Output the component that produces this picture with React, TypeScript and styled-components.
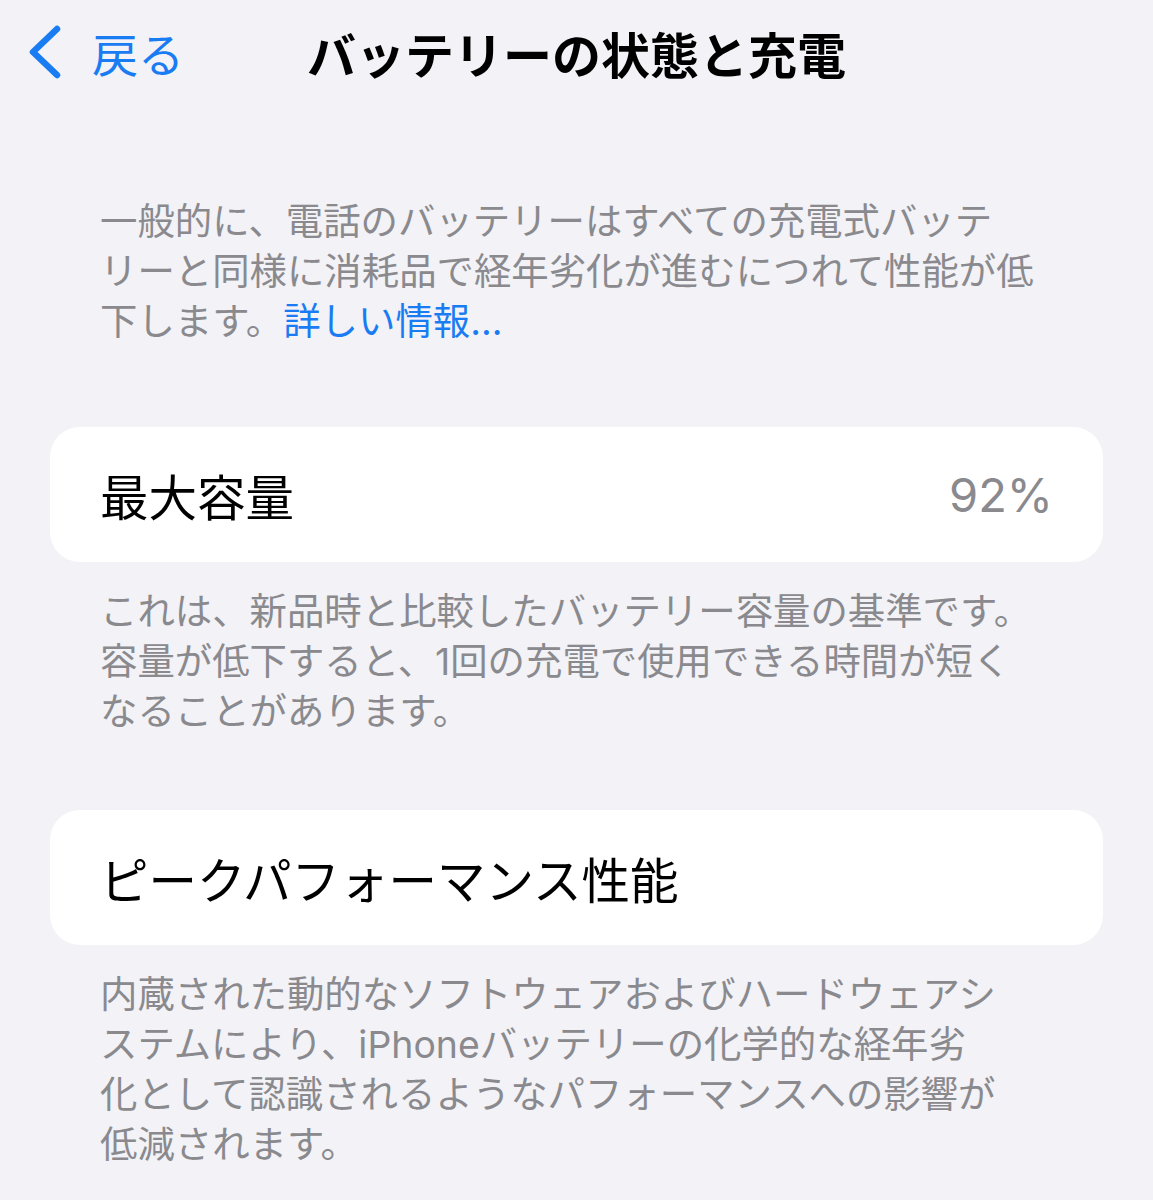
import * as React from 'react';
import styled, { createGlobalStyle } from 'styled-components';

const GlobalStyle = createGlobalStyle`
  html, body {
    margin: 0;
    padding: 0;
    background: #f2f2f7;
  }
  body {
    font-family: Inter, "Noto Sans CJK JP", sans-serif;
    -webkit-font-smoothing: antialiased;
  }
`;

const StyledPage = styled.div`
  display: flex;
  flex-direction: column;
  width: 1153px;
  min-height: 1200px;
  background: #f2f2f7;
`;

const StyledNav = styled.header`
  display: grid;
  grid-template-columns: 1fr auto 1fr;
  align-items: center;
  height: 104px;
`;

const StyledBack = styled.button`
  justify-self: start;
  display: flex;
  align-items: center;
  gap: 30px;
  border: none;
  padding: 0 0 0 26px;
  background: none;
  font-family: inherit;
  font-size: 46px;
  color: #1a7cf2;
  cursor: pointer;
`;

const StyledTitle = styled.h1`
  margin: 0;
  font-size: 49px;
  font-weight: 700;
  color: #000;
  white-space: nowrap;
`;

const StyledContent = styled.main`
  display: flex;
  flex-direction: column;
  padding: 93px 50px 0;
`;

const StyledNote = styled.p<{ $after?: number }>`
  margin: 0 0 ${(p) => p.$after ?? 0}px;
  padding: 0 50px;
  font-size: 37.4px;
  line-height: 50px;
  color: #8a8a8e;
  white-space: nowrap;
`;

const StyledLink = styled.a`
  color: #1a7cf2;
  text-decoration: none;
`;

const StyledCard = styled.div`
  display: flex;
  align-items: center;
  justify-content: space-between;
  height: 135px;
  padding: 0 50px;
  margin-bottom: 25px;
  border-radius: 30px;
  background: #fff;
`;

const StyledLabel = styled.span`
  font-size: 48.5px;
  color: #000;
`;

const StyledValue = styled.span`
  font-size: 47px;
  font-weight: 400;
  color: #8a8a8e;
`;

const Chevron = () => (
  <svg width="36" height="54" viewBox="0 0 36 54" fill="none">
    <polyline
      points="31,4 7,27 31,50"
      stroke="#1a7cf2"
      strokeWidth="6.5"
      strokeLinecap="round"
      strokeLinejoin="round"
    />
  </svg>
);

export default function App() {
  return (
    <StyledPage>
      <GlobalStyle />
      <StyledNav>
        <StyledBack>
          <Chevron />
          戻る
        </StyledBack>
        <StyledTitle>バッテリーの状態と充電</StyledTitle>
        <span />
      </StyledNav>
      <StyledContent>
        <StyledNote $after={80}>
          一般的に、電話のバッテリーはすべての充電式バッテ
          <br />
          リーと同様に消耗品で経年劣化が進むにつれて性能が低
          <br />
          下します。<StyledLink href="#">詳しい情報...</StyledLink>
        </StyledNote>

        <StyledCard>
          <StyledLabel>最大容量</StyledLabel>
          <StyledValue>92%</StyledValue>
        </StyledCard>
        <StyledNote $after={73}>
          これは、新品時と比較したバッテリー容量の基準です。
          <br />
          容量が低下すると、1回の充電で使用できる時間が短く
          <br />
          なることがあります。
        </StyledNote>

        <StyledCard>
          <StyledLabel>ピークパフォーマンス性能</StyledLabel>
        </StyledCard>
        <StyledNote>
          内蔵された動的なソフトウェアおよびハードウェアシ
          <br />
          ステムにより、iPhoneバッテリーの化学的な経年劣
          <br />
          化として認識されるようなパフォーマンスへの影響が
          <br />
          低減されます。
        </StyledNote>
      </StyledContent>
    </StyledPage>
  );
}
